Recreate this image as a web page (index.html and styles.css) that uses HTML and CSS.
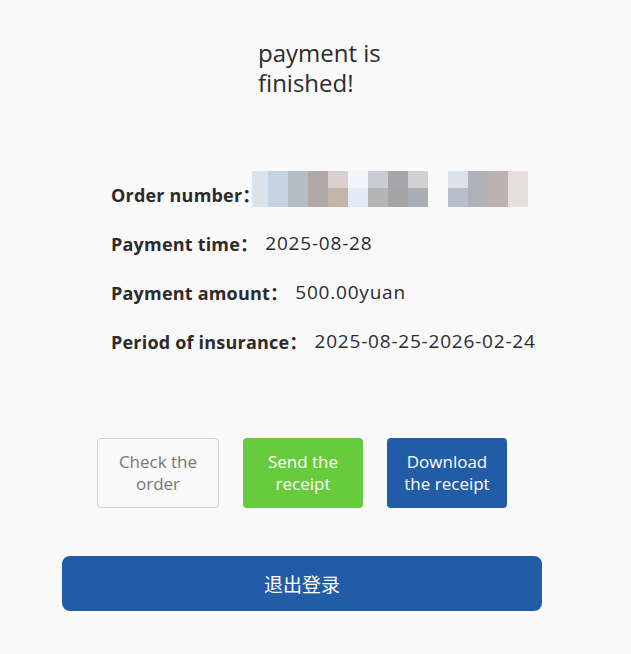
FILE: index.html
```html
<!DOCTYPE html>
<html lang="en">
<head>
<meta charset="utf-8">
<title>payment is finished</title>
<link rel="stylesheet" href="styles.css">
</head>
<body>
<main class="page">
  <h1 class="title">payment is finished!</h1>

  <section class="info">
    <div class="row"><span class="label">Order number：</span><span class="mosaic">
      <span class="col"><i style="background:#dde3eb"></i><i style="background:#dde3eb"></i></span>
      <span class="col w20"><i style="background:#c6d3e0"></i><i style="background:#c6d3e0"></i></span>
      <span class="col w20"><i style="background:#b4bcc4"></i><i style="background:#b4bcc4"></i></span>
      <span class="col w20"><i style="background:#afa8a5"></i><i style="background:#afa8a5"></i></span>
      <span class="col w20"><i style="background:#dad0cf"></i><i style="background:#c4b5ab"></i></span>
      <span class="col w20"><i style="background:#f1f4f8"></i><i style="background:#e2ebf5"></i></span>
      <span class="col w20"><i style="background:#c7cbd2"></i><i style="background:#b5b5b5"></i></span>
      <span class="col w20"><i style="background:#a5a6a9"></i><i style="background:#a4a4a6"></i></span>
      <span class="col w20"><i style="background:#d0d0d0"></i><i style="background:#a9aeb4"></i></span>
      <span class="col w20"><i style="background:#f8f8f8"></i><i style="background:#f8f8f8"></i></span>
      <span class="col w20"><i style="background:#dce2ea"></i><i style="background:#b5bfcb"></i></span>
      <span class="col w20"><i style="background:#adb1b8"></i><i style="background:#adb1b8"></i></span>
      <span class="col w20"><i style="background:#bdb2ad"></i><i style="background:#bdb2ad"></i></span>
      <span class="col w20"><i style="background:#e6dfdc"></i><i style="background:#e6dfdc"></i></span>
    </span></div>
    <div class="row"><span class="label">Payment time：</span><span class="value">2025-08-28</span></div>
    <div class="row"><span class="label">Payment amount：</span><span class="value">500.00yuan</span></div>
    <div class="row"><span class="label">Period of insurance：</span><span class="value">2025-08-25-2026-02-24</span></div>
  </section>

  <section class="actions">
    <button class="btn btn-outline">Check the order</button>
    <button class="btn btn-green">Send the receipt</button>
    <button class="btn btn-blue">Download the receipt</button>
  </section>

  <button class="logout">退出登录</button>
</main>
</body>
</html>
```
FILE: styles.css
```css
* { box-sizing: border-box; }
html, body {
  margin: 0;
  padding: 0;
  background: #f9f9f9;
}
body {
  font-family: "Open Sans", "Noto Sans CJK SC", sans-serif;
  color: #2b2b2b;
}
.page {
  display: flex;
  flex-direction: column;
  padding-top: 38px;
}
.title {
  margin: 0 0 0 258px;
  width: 130px;
  font-size: 24px;
  font-weight: 400;
  line-height: 30px;
  color: #2b2b2b;
}
.info {
  margin: 71px 0 0 111px;
  display: flex;
  flex-direction: column;
}
.row {
  height: 49px;
  display: flex;
  align-items: center;
  font-size: 18px;
  white-space: nowrap;
}
.label {
  font-weight: 700;
  letter-spacing: 0.2px;
}
.value {
  margin-left: 7px;
  font-size: 19px;
  letter-spacing: 0.8px;
}
.mosaic {
  display: flex;
  margin-top: -10px;
  margin-left: -9px;
}
.col {
  display: flex;
  flex-direction: column;
  width: 16px;
}
.col.w20 { width: 20px; }
.col i {
  display: block;
  height: 17px;
}
.col i + i { height: 19px; }
.actions {
  margin: 73px 0 0 97px;
  display: flex;
  gap: 24px;
}
.btn {
  height: 70px;
  border-radius: 4px;
  font-family: inherit;
  font-size: 17px;
  line-height: 22px;
  padding: 0 14px;
  border: 1px solid transparent;
  cursor: pointer;
}
.btn-outline {
  width: 122px;
  background: #f9f9f9;
  border-color: #cfcfcf;
  color: #777;
}
.btn-green {
  width: 120px;
  background: #66cc3c;
  color: #fff;
}
.btn-blue {
  width: 120px;
  background: #225ba6;
  color: #fff;
}
.logout {
  margin: 48px 0 0 62px;
  width: 480px;
  height: 55px;
  border: none;
  border-radius: 8px;
  background: #225ba6;
  color: #fff;
  font-family: inherit;
  font-size: 19px;
  cursor: pointer;
}
```
